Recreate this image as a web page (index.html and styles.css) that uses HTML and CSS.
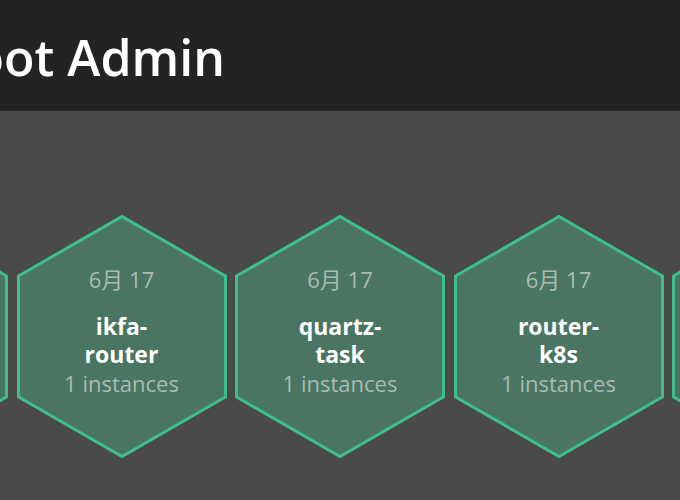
FILE: index.html
```html
<!DOCTYPE html>
<html lang="zh">
<head>
<meta charset="utf-8">
<title>Spring Boot Admin</title>
<link rel="stylesheet" href="styles.css">
</head>
<body>
<header class="topbar">
  <h1 class="title">Spring Boot Admin</h1>
</header>
<main class="canvas">
  <div class="hex-row">
    <div class="hex">
      <svg class="hex-shape" viewBox="0 0 210 243" aria-hidden="true"><polygon points="105,1.5 208.5,61 208.5,182 105,241.5 1.5,182 1.5,61"/></svg>
      <div class="hex-body"><div class="date">6月 17</div><div class="name">ikfa-<br>gateway</div><div class="count">1 instances</div></div>
    </div>
    <div class="hex">
      <svg class="hex-shape" viewBox="0 0 210 243" aria-hidden="true"><polygon points="105,1.5 208.5,61 208.5,182 105,241.5 1.5,182 1.5,61"/></svg>
      <div class="hex-body"><div class="date">6月 17</div><div class="name">ikfa-<br>router</div><div class="count">1 instances</div></div>
    </div>
    <div class="hex">
      <svg class="hex-shape" viewBox="0 0 210 243" aria-hidden="true"><polygon points="105,1.5 208.5,61 208.5,182 105,241.5 1.5,182 1.5,61"/></svg>
      <div class="hex-body"><div class="date">6月 17</div><div class="name">quartz-<br>task</div><div class="count">1 instances</div></div>
    </div>
    <div class="hex">
      <svg class="hex-shape" viewBox="0 0 210 243" aria-hidden="true"><polygon points="105,1.5 208.5,61 208.5,182 105,241.5 1.5,182 1.5,61"/></svg>
      <div class="hex-body"><div class="date">6月 17</div><div class="name">router-<br>k8s</div><div class="count">1 instances</div></div>
    </div>
    <div class="hex">
      <svg class="hex-shape" viewBox="0 0 210 243" aria-hidden="true"><polygon points="105,1.5 208.5,61 208.5,182 105,241.5 1.5,182 1.5,61"/></svg>
      <div class="hex-body"><div class="date">6月 17</div><div class="name">zuul-<br>server</div><div class="count">1 instances</div></div>
    </div>
  </div>
</main>
</body>
</html>
```
FILE: styles.css
```css
html, body {
  margin: 0;
  padding: 0;
  width: 680px;
  height: 500px;
  overflow: hidden;
  background: #4a4a4a;
  font-family: "Open Sans", "Noto Sans CJK SC", sans-serif;
}
.topbar {
  height: 111px;
  background: #232323;
  display: flex;
  align-items: center;
  overflow: hidden;
}
.title {
  margin: 0 0 0 -226px;
  font-size: 50px;
  font-weight: 600;
  color: #ffffff;
  white-space: nowrap;
  line-height: 1;
  padding-top: 3px;
}
.canvas {
  height: 389px;
  overflow: hidden;
  display: flex;
  justify-content: center;
}
.hex-row {
  display: flex;
  gap: 8.5px;
  padding-top: 104px;
  flex: none;
}
.hex {
  position: relative;
  width: 210px;
  height: 243px;
  flex: none;
}
.hex-shape {
  position: absolute;
  inset: 0;
  width: 210px;
  height: 243px;
}
.hex-shape polygon {
  fill: #4a7563;
  stroke: #3ec08e;
  stroke-width: 3;
  stroke-linejoin: miter;
}
.hex-body {
  position: relative;
  height: 100%;
  display: flex;
  flex-direction: column;
  align-items: center;
  justify-content: center;
  text-align: center;
  padding-bottom: 10px;
  box-sizing: border-box;
}
.date {
  font-size: 22px;
  color: #a9bcb3;
  line-height: 28px;
  margin-bottom: 19px;
}
.name {
  font-size: 23px;
  font-weight: 700;
  color: #ffffff;
  line-height: 28px;
}
.count {
  font-size: 22px;
  color: #a9bcb3;
  line-height: 30px;
}
```
